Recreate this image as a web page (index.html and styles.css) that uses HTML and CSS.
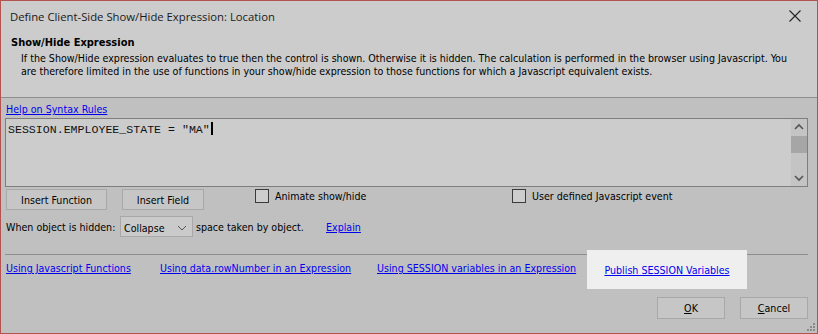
FILE: index.html
```html
<!DOCTYPE html>
<html>
<head>
<meta charset="utf-8">
<link rel="stylesheet" href="styles.css">
</head>
<body>
<div class="window">
  <div class="header">
    <div class="titlebar">
      <span class="title">Define Client-Side Show/Hide Expression: Location</span>
      <svg class="close" width="12" height="12" viewBox="0 0 12 12"><path d="M0.5 0.5 L11.5 11.5 M11.5 0.5 L0.5 11.5" stroke="#222" stroke-width="1.1" fill="none"/></svg>
    </div>
    <div class="section-title">Show/Hide Expression</div>
    <div class="desc">If the Show/Hide expression evaluates to true then the control is shown. Otherwise it is hidden. The calculation is performed in the browser using Javascript. You are therefore limited in the use of functions in your show/hide expression to those functions for which a Javascript equivalent exists.</div>
  </div>
  <div class="body">
    <a class="link help" href="#">Help on Syntax Rules</a>
    <div class="editor">
      <div class="code">SESSION.EMPLOYEE_STATE = "MA"<span class="caret"></span></div>
      <div class="scrollbar">
        <svg class="arrow" width="16" height="16" viewBox="0 0 16 16"><path d="M4 10 L8 6 L12 10" stroke="#555" stroke-width="1.6" fill="none"/></svg>
        <div class="thumb"></div>
        <div class="track"></div>
        <svg class="arrow" width="16" height="16" viewBox="0 0 16 16"><path d="M4 6 L8 10 L12 6" stroke="#555" stroke-width="1.6" fill="none"/></svg>
      </div>
    </div>
    <div class="row1">
      <button class="btn btn-func">Insert Function</button>
      <button class="btn btn-field">Insert Field</button>
      <label class="check check-anim"><span class="box"></span>Animate show/hide</label>
      <label class="check check-user"><span class="box"></span>User defined Javascript event</label>
    </div>
    <div class="row2">
      <span class="lbl">When object is hidden:</span>
      <span class="select">Collapse<svg width="10" height="6" viewBox="0 0 10 6"><path d="M1 1 L5 5 L9 1" stroke="#555" stroke-width="1" fill="none"/></svg></span>
      <span class="lbl2">space taken by object.</span>
      <a class="link explain" href="#">Explain</a>
    </div>
    <div class="sep"></div>
    <div class="links">
      <a class="link l1" href="#">Using Javascript Functions</a>
      <a class="link l2" href="#">Using data.rowNumber in an Expression</a>
      <a class="link l3" href="#">Using SESSION variables in an Expression</a>
      <span class="highlight"><a class="link l4" href="#">Publish SESSION Variables</a></span>
    </div>
    <div class="footer">
      <button class="btn btn-ok"><u>O</u>K</button>
      <button class="btn btn-cancel"><u>C</u>ancel</button>
    </div>
    <svg class="grip" width="10" height="10" viewBox="0 0 10 10"><g fill="#8a8a8a"><rect x="7" y="1" width="2" height="2"/><rect x="4" y="4" width="2" height="2"/><rect x="7" y="4" width="2" height="2"/><rect x="1" y="7" width="2" height="2"/><rect x="4" y="7" width="2" height="2"/><rect x="7" y="7" width="2" height="2"/></g></svg>
  </div>
</div>
</body>
</html>
```
FILE: styles.css
```css
html, body {
  margin: 0;
  padding: 0;
  background: #c0c0c0;
}
.window {
  position: relative;
  width: 818px;
  height: 334px;
  box-sizing: border-box;
  border: 1px solid #b4524f;
  background: #c0c0c0;
  font-family: "DejaVu Sans Condensed", "DejaVu Sans", sans-serif;
  font-size: 10.6px;
  color: #000;
  overflow: hidden;
}
.header {
  background: #cccccc;
  height: 97px;
  border-bottom: 1px solid #8e8e8e;
  box-sizing: border-box;
}
.titlebar {
  height: 30px;
  display: flex;
  align-items: center;
  justify-content: space-between;
  padding: 0 16px 0 9px;
}
.title {
  font-family: "Open Sans", "DejaVu Sans", sans-serif;
  font-size: 11.3px;
  color: #1a1a1a;
}
.close { margin-top: 0; }
.section-title {
  font-weight: bold;
  font-size: 11px;
  padding-left: 10px;
  line-height: 16px;
  margin-top: 4px;
}
.desc {
  padding: 0 14px 0 20px;
  line-height: 13px;
  margin-top: 1px;
}
.body {
  padding: 0 9px 0 4px;
}
.link {
  color: #0000ee;
  text-decoration: underline;
}
.help {
  display: block;
  margin-top: 4px;
  margin-left: 1px;
  line-height: 14px;
}
.editor {
  display: flex;
  margin-top: 2px;
  height: 69px;
  box-sizing: border-box;
  border: 1px solid #7e7e7e;
  background: #cccccc;
}
.code {
  flex: 1;
  font-family: "Liberation Mono", monospace;
  font-size: 11.6px;
  padding: 3px 0 0 2px;
  line-height: 13px;
  color: #111;
}
.caret {
  display: inline-block;
  width: 2px;
  height: 13px;
  background: #000;
  vertical-align: -2px;
  margin-left: 1px;
}
.scrollbar {
  width: 16px;
  display: flex;
  flex-direction: column;
  background: #c4c4c4;
}
.thumb {
  height: 17px;
  background: #a6a6a6;
  margin: 1px 0 0 0;
}
.track { flex: 1; }
.row1 {
  display: flex;
  align-items: flex-start;
  margin-top: 2px;
  height: 22px;
}
.btn {
  font-family: inherit;
  font-size: 10.6px;
  background: #c6c6c6;
  border: 1px solid #a8a8a8;
  color: #000;
  height: 21px;
  padding: 0;
  margin: 0;
}
.btn-func { width: 101px; margin-left: 1px; }
.btn-field { width: 82px; margin-left: 15px; }
.check {
  display: flex;
  align-items: center;
  line-height: 14px;
}
.box {
  width: 12px;
  height: 12px;
  border: 1px solid #3a3a3a;
  background: #cdcdcd;
  margin-right: 6px;
}
.check-anim { width: 257px; margin-left: 51px; }
.row2 {
  display: flex;
  align-items: center;
  margin-top: 5px;
  height: 21px;
}
.lbl { width: 114px; margin-left: 1px; }
.select {
  display: flex;
  align-items: center;
  justify-content: space-between;
  box-sizing: border-box;
  width: 73px;
  height: 21px;
  padding: 2px 5px 0 3px;
  border: 1px solid #a8a8a8;
  background: #cacaca;
}
.lbl2 { width: 130px; margin-left: 3px; }
.sep {
  margin-top: 17px;
  height: 1px;
  background: #8e8e8e;
}
.links {
  display: flex;
  align-items: center;
  height: 26px;
  padding-left: 1px;
}
.l1 { width: 154px; }
.l2 { width: 217px; }
.highlight {
  position: absolute;
  left: 586px;
  top: 249px;
  width: 160px;
  height: 39px;
  background: #efefef;
  display: flex;
  align-items: center;
  justify-content: center;
}
.footer {
  display: flex;
  justify-content: flex-end;
  margin-top: 16px;
}
.btn-ok { width: 68px; height: 22px; }
.btn-cancel { width: 68px; height: 22px; margin-left: 15px; }
.grip {
  position: absolute;
  right: 1px;
  bottom: 1px;
}
```
